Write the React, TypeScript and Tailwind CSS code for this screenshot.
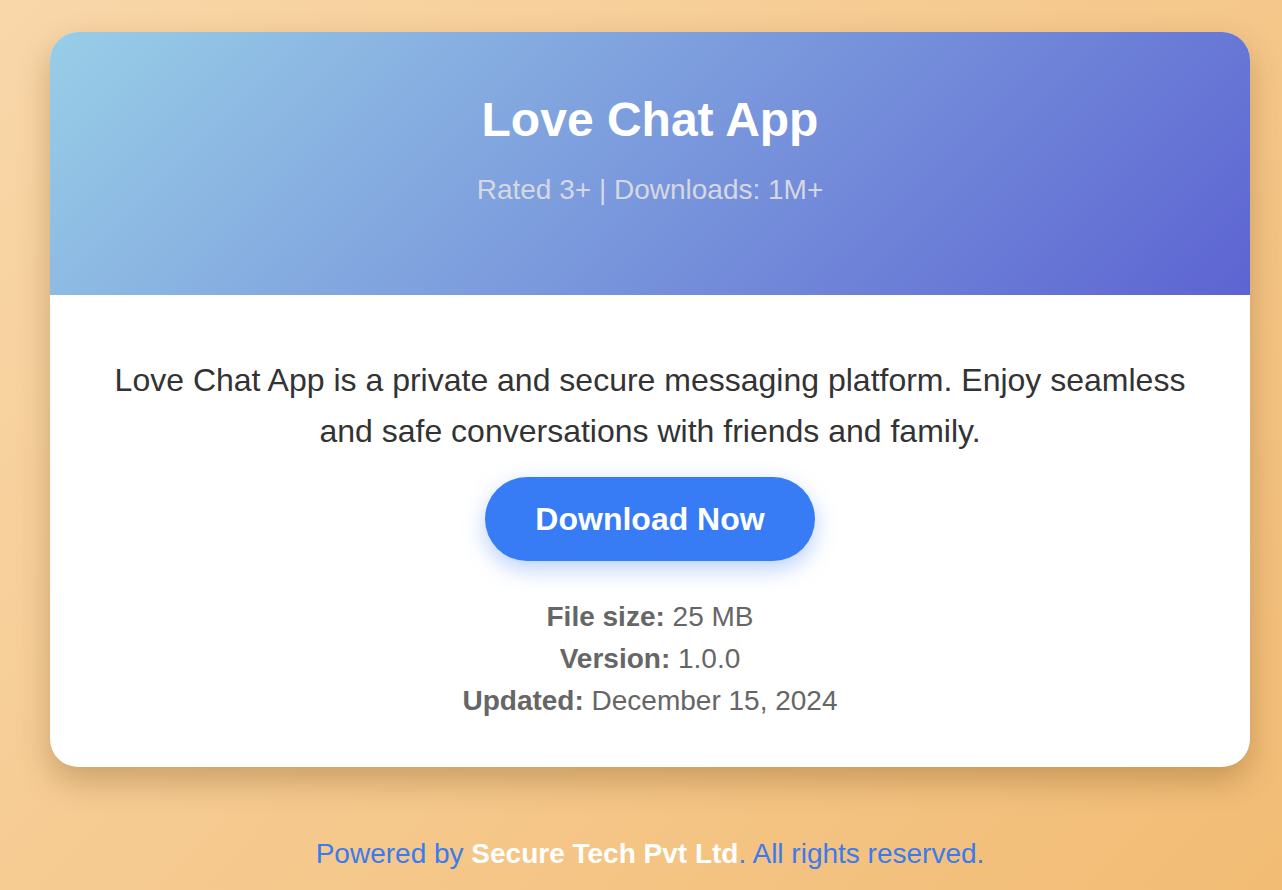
import React from 'react';

function App() {
  return (
    <div className="min-h-screen bg-[linear-gradient(135deg,#f9d7a9,#f2bc74)] pt-8 pl-[18px] font-['Liberation_Sans',Arial,sans-serif]">
      <div className="mx-auto w-[1200px] overflow-hidden rounded-[28px] bg-white shadow-[0_14px_32px_rgba(90,50,0,0.28)]">
        <div className="h-[263px] bg-[linear-gradient(135deg,#98cee7,#5d64d2)] pt-[59px] text-center">
          <h1 className="text-[48px] font-bold leading-[58px] text-white">Love Chat App</h1>
          <p className="mt-[20px] text-[28px] leading-[42px] text-[#d5d8e2]">Rated 3+ | Downloads: 1M+</p>
        </div>

        <div className="px-12 pt-[60px] pb-[45px] text-center">
          <p className="text-[32px] leading-[51px] text-[#333333]">
            Love Chat App is a private and secure messaging platform. Enjoy seamless and safe conversations with friends and family.
          </p>
          <button className="mt-5 h-[84px] rounded-full bg-[#377bf5] px-[50px] text-[32px] font-bold text-white shadow-[0_8px_22px_rgba(55,123,245,0.35)]">
            Download Now
          </button>
          <div className="mt-[35px] text-[28px] leading-[42px] text-[#666666]">
            <p><span className="font-bold">File size:</span> 25 MB</p>
            <p><span className="font-bold">Version:</span> 1.0.0</p>
            <p><span className="font-bold">Updated:</span> December 15, 2024</p>
          </div>
        </div>
      </div>

      <footer className="mt-[66px] text-center text-[28px] leading-[42px] text-[#3a7bf0]">
        Powered by <span className="font-bold text-white">Secure Tech Pvt Ltd</span>. All rights reserved.
      </footer>
    </div>
  );
}

export default App;
